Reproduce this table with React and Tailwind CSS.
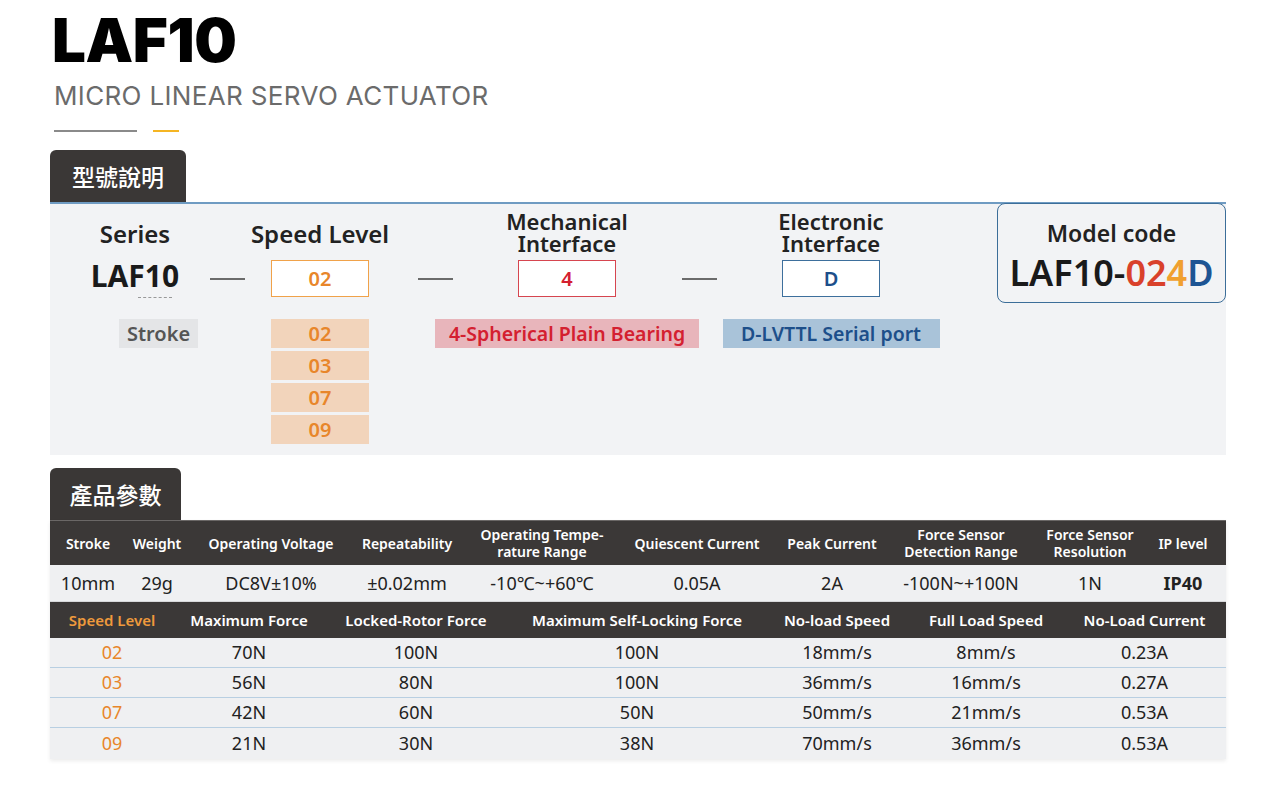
export default function App() {
  const specHead = [
    ["Stroke"],
    ["Weight"],
    ["Operating Voltage"],
    ["Repeatability"],
    ["Operating Tempe-", "rature Range"],
    ["Quiescent Current"],
    ["Peak Current"],
    ["Force Sensor", "Detection Range"],
    ["Force Sensor", "Resolution"],
    ["IP level"],
  ];
  const specVals = ["10mm", "29g", "DC8V±10%", "±0.02mm", "-10℃~+60℃", "0.05A", "2A", "-100N~+100N", "1N", "IP40"];
  const speedHead = ["Speed Level", "Maximum Force", "Locked-Rotor Force", "Maximum Self-Locking Force", "No-load Speed", "Full Load Speed", "No-Load Current"];
  const speedRows = [
    ["02", "70N", "100N", "100N", "18mm/s", "8mm/s", "0.23A"],
    ["03", "56N", "80N", "100N", "36mm/s", "16mm/s", "0.27A"],
    ["07", "42N", "60N", "50N", "50mm/s", "21mm/s", "0.53A"],
    ["09", "21N", "30N", "38N", "70mm/s", "36mm/s", "0.53A"],
  ];
  const specCols = "grid grid-cols-[76px_62px_166px_106px_164px_146px_124px_134px_124px_62px] pr-[11px]";
  const speedCols = "grid grid-cols-[124px_150px_184px_258px_142px_156px_161px]";

  return (
    <div className="min-h-screen bg-white pl-[50px] font-['Noto_Sans',sans-serif] text-[#222]">
      <div className="w-[1176px]">
        {/* title */}
        <h1 className="mt-[10px] h-[60px] font-['Inter',sans-serif] text-[60px] font-black leading-none tracking-[-0.4px] text-black pl-[2px]">
          LAF10
        </h1>
        <div className="mt-[13px] h-[26px] pl-[4px] font-['Inter',sans-serif] text-[26px] leading-none tracking-[0.35px] text-[#6b6b6b]">
          MICRO LINEAR SERVO ACTUATOR
        </div>
        <div className="mt-[21px] flex items-center pl-[4px]">
          <div className="h-[2px] w-[83px] bg-[#8a8a8a]" />
          <div className="ml-[16px] h-[2px] w-[26px] bg-[#f5b523]" />
        </div>

        {/* model tab */}
        <div className="mt-[18px] flex h-[52px] w-[136px] items-center justify-center rounded-t-[6px] bg-[#3a3736] font-['Noto_Sans_CJK_TC',sans-serif] text-[23px] font-medium text-white">
          型號說明
        </div>
        <div className="h-[2px] bg-[#6f9bc2]" />
        <div className="flex h-[251px] bg-[#f2f3f5] pl-[35px]">
          {/* series */}
          <div className="flex w-[100px] flex-col items-center">
            <div className="flex h-[56px] items-center pt-[4px] text-[24px] font-semibold">Series</div>
            <div className="flex h-[37px] flex-col items-center justify-center">
              <div className="mt-[2px] text-[30px] font-bold leading-none text-[#1a1a1a]">LAF10</div>
              <div className="ml-[40px] mt-[6px] w-[34px] border-t border-dashed border-[#999]" />
            </div>
            <div className="ml-[47px] mt-[22px] flex h-[29px] w-[79px] items-center justify-center bg-[#e4e5e7] text-[20px] font-semibold text-[#555]">
              Stroke
            </div>
          </div>
          <Dash ml="ml-[25px]" />
          {/* speed */}
          <div className="ml-[26px] flex w-[98px] flex-col items-center">
            <div className="flex h-[56px] items-center whitespace-nowrap pt-[4px] text-[24px] font-semibold">Speed Level</div>
            <div className="flex h-[37px] w-[98px] items-center justify-center border border-[#f0a24a] bg-white text-[20px] font-semibold text-[#e8862a]">
              02
            </div>
            <div className="mt-[22px] flex flex-col gap-[3px]">
              {["02", "03", "07", "09"].map(s => (
                <div key={s} className="flex h-[29px] w-[98px] items-center justify-center bg-[#f2d4bb] text-[20px] font-semibold text-[#e8862a]">
                  {s}
                </div>
              ))}
            </div>
          </div>
          <Dash ml="ml-[49px]" />
          {/* mechanical */}
          <div className="ml-[65px] flex w-[98px] flex-col items-center">
            <div className="flex h-[56px] items-center">
              <div className="whitespace-nowrap text-center text-[22px] font-semibold leading-[22px]">
                Mechanical
                <br />
                Interface
              </div>
            </div>
            <div className="flex h-[37px] w-[98px] items-center justify-center border border-[#d6454f] bg-white text-[20px] font-semibold text-[#d42030]">
              4
            </div>
            <div className="mt-[22px] flex h-[29px] w-[264px] shrink-0 items-center justify-center whitespace-nowrap bg-[#e8b5bb] text-[19.5px] font-semibold text-[#d42030]">
              4-Spherical Plain Bearing
            </div>
          </div>
          <Dash ml="ml-[66px]" />
          {/* electronic */}
          <div className="ml-[65px] flex w-[98px] flex-col items-center">
            <div className="flex h-[56px] items-center">
              <div className="whitespace-nowrap text-center text-[22px] font-semibold leading-[22px]">
                Electronic
                <br />
                Interface
              </div>
            </div>
            <div className="flex h-[37px] w-[98px] items-center justify-center border border-[#3d6f9c] bg-white text-[20px] font-semibold text-[#1d4f8a]">
              D
            </div>
            <div className="mt-[22px] flex h-[29px] w-[217px] shrink-0 items-center justify-center whitespace-nowrap bg-[#a9c3d9] text-[19.5px] font-semibold text-[#1d4f8a]">
              D-LVTTL Serial port
            </div>
          </div>
          {/* model code */}
          <div className="-mt-[1px] ml-auto flex h-[100px] w-[229px] flex-col items-center rounded-[8px] border-[1.5px] border-[#3c6e99] bg-[#f2f3f5]">
            <div className="mt-[14px] text-[23px] font-semibold leading-[30px]">Model code</div>
            <div className="mt-[3px] text-[36px] font-semibold leading-[44px] text-[#1a1a1a]">
              LAF10-<span className="text-[#d9412b]">02</span>
              <span className="text-[#f0a030]">4</span>
              <span className="text-[#1d5493]">D</span>
            </div>
          </div>
        </div>

        {/* params tab */}
        <div className="mt-[13px] flex h-[52px] w-[131px] items-center justify-center rounded-t-[6px] bg-[#3a3736] font-['Noto_Sans_CJK_TC',sans-serif] text-[23px] font-medium text-white">
          產品參數
        </div>
        <div className="shadow-[0_2px_4px_rgba(0,0,0,0.08)]">
          <div className={`${specCols} h-[45px] items-center border-t border-[#6a6766] bg-[#3b3837] text-[14px] font-semibold leading-[17px] text-white`}>
            {specHead.map((h, i) => (
              <div key={i} className="flex flex-col items-center whitespace-nowrap">
                {h.map(l => (
                  <span key={l}>{l}</span>
                ))}
              </div>
            ))}
          </div>
          <div className={`${specCols} h-[36px] items-center bg-[#eff0f2] text-[18px]`}>
            {specVals.map((v, i) => (
              <div key={i} className={`text-center whitespace-nowrap ${i === 9 ? "font-bold" : ""}`}>
                {v}
              </div>
            ))}
          </div>
          <div className="h-[1px] bg-[#d7d8da]" />
          <div className={`${speedCols} h-[36px] items-center bg-[#3b3837] text-[15px] font-semibold text-white`}>
            {speedHead.map((h, i) => (
              <div key={h} className={`text-center whitespace-nowrap ${i === 0 ? "text-[#ef9a3c]" : ""}`}>
                {h}
              </div>
            ))}
          </div>
          {speedRows.map((r, ri) => (
            <div
              key={ri}
              className={`${speedCols} h-[30px] items-center bg-[#eff0f2] text-[18px] ${ri < 3 ? "border-b border-[#b8cfe2]" : "h-[31px]"}`}
            >
              {r.map((v, i) => (
                <div key={i} className={`text-center ${i === 0 ? "text-[#e8862a]" : ""}`}>
                  {v}
                </div>
              ))}
            </div>
          ))}
        </div>
      </div>
    </div>
  );
}

function Dash({ ml }) {
  return (
    <div className={`${ml} flex w-[35px] shrink-0 flex-col`}>
      <div className="h-[56px]" />
      <div className="flex h-[37px] items-center">
        <div className="h-[2px] w-[35px] bg-[#6b6b6b]" />
      </div>
    </div>
  );
}
